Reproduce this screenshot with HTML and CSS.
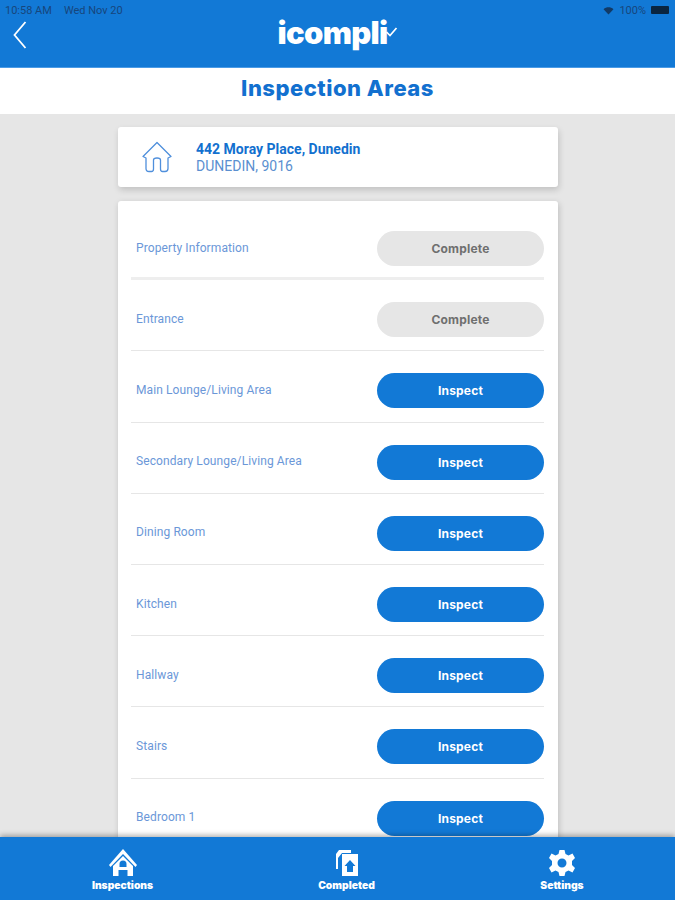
FILE: index.html
```html
<!DOCTYPE html>
<html lang="en">
<head>
<meta charset="utf-8">
<title>Inspection Areas</title>
<link rel="stylesheet" href="styles.css">
</head>
<body>
<div class="app">
  <header class="topbar">
    <div class="status">
      <div class="status-left"><span>10:58 AM</span><span>Wed Nov 20</span></div>
      <div class="status-right">
        <svg class="wifi" viewBox="0 0 12 10"><path d="M6 9.500 0.500 3.500C3.500.7 8.500.7 11.500 3.500Z" fill="#123a66"/></svg>
        <span>100%</span>
        <span class="battery"></span>
      </div>
    </div>
    <div class="nav">
      <svg class="back" viewBox="0 0 14 30"><path d="M13 2 2 15 13 28" fill="none" stroke="#fff" stroke-width="1.800"/></svg>
      <div class="logo">
        <span>icompli</span>
        <svg class="logo-check" viewBox="0 0 12 10"><path d="M1 5 4.500 8.500 11 1" fill="none" stroke="#fff" stroke-width="1.700"/></svg>
      </div>
    </div>
  </header>
  <div class="title-band"><h1>Inspection Areas</h1></div>
  <main class="content">
    <section class="address-card">
      <svg class="house" viewBox="0 0 32 32">
        <path d="M2 15.500 16 1.500 30 15.500 27 17V27.500Q27 30.500 24 30.500H21.500Q19.500 30.500 19.500 28V19Q19.500 17 16 17 12.500 17 12.500 19V28Q12.500 30.500 10.500 30.500H8Q5 30.500 5 27.500V17Z" fill="none" stroke="#4f8fdc" stroke-width="1.300" stroke-linejoin="round"/>
      </svg>
      <div class="address-text">
        <div class="address-line">442 Moray Place, Dunedin</div>
        <div class="address-sub">DUNEDIN, 9016</div>
      </div>
    </section>
    <section class="list-card">
      <div class="row row-first"><span class="label">Property Information</span><span class="btn done">Complete</span></div>
      <div class="row"><span class="label">Entrance</span><span class="btn done">Complete</span></div>
      <div class="row"><span class="label">Main Lounge/Living Area</span><span class="btn">Inspect</span></div>
      <div class="row"><span class="label">Secondary Lounge/Living Area</span><span class="btn">Inspect</span></div>
      <div class="row"><span class="label">Dining Room</span><span class="btn">Inspect</span></div>
      <div class="row"><span class="label">Kitchen</span><span class="btn">Inspect</span></div>
      <div class="row"><span class="label">Hallway</span><span class="btn">Inspect</span></div>
      <div class="row"><span class="label">Stairs</span><span class="btn">Inspect</span></div>
      <div class="row"><span class="label">Bedroom 1</span><span class="btn">Inspect</span></div>
    </section>
  </main>
  <nav class="tabbar">
    <div class="tab tab-a">
      <svg class="tab-icon" viewBox="0 0 28 28"><path fill="#fff" fill-rule="evenodd" d="M14 0 28 16 26.500 18 14 5 1.500 18 0 16ZM14 7 24 17V27H18.500V21H9.500V27H4V17ZM14 11.500A3.500 3.500 0 0 0 10.500 15V18H17.500V15A3.500 3.500 0 0 0 14 11.500Z"/></svg>
      <span>Inspections</span>
    </div>
    <div class="tab tab-b">
      <svg class="tab-icon" viewBox="0 0 28 28"><path fill="#fff" fill-rule="evenodd" d="M6 1H18V4H9L5 9V20H3V5ZM9 5H25V27H9ZM17 11 11.500 17H14V23H20V17H22.500Z"/></svg>
      <span>Completed</span>
    </div>
    <div class="tab tab-c">
      <svg class="tab-icon" viewBox="0 0 28 28"><path fill="#fff" fill-rule="evenodd" d="M11.500 1H16.500L17.500 5 20.500 6.500 24.500 4.500 27 9 24 12V16L27 19 24.500 23.500 20.500 21.500 17.500 23 16.500 27H11.500L10.500 23 7.500 21.500 3.500 23.500 1 19 4 16V12L1 9 3.500 4.500 7.500 6.500 10.500 5ZM14 9.500A4.500 4.500 0 1 0 14 18.500 4.500 4.500 0 1 0 14 9.500Z"/></svg>
      <span>Settings</span>
    </div>
  </nav>
</div>
</body>
</html>
```
FILE: styles.css
```css
* { box-sizing: border-box; }
html, body { margin: 0; padding: 0; }
body { font-family: "Roboto", "Liberation Sans", sans-serif; background: #e6e6e6; }
.app { width: 675px; height: 900px; display: flex; flex-direction: column; overflow: hidden; }
.topbar { height: 68px; flex: none; background: #1279d6; border-bottom: 1px solid #4b9be6; }
.status { height: 18px; padding: 2px 6px 0 5px; display: flex; justify-content: space-between; align-items: center; font-size: 11px; color: #17467c; }
.status-left { display: flex; gap: 12px; }
.status-right { display: flex; align-items: center; gap: 5px; }
.wifi { width: 11px; height: 9px; }
.battery { width: 18px; height: 8px; background: #0a2540; border-radius: 1px; }
.nav { position: relative; height: 49px; display: flex; justify-content: center; align-items: flex-start; }
.back { position: absolute; left: 12px; top: 2px; width: 15px; height: 30px; }
.logo { position: relative; top: -3px; font-family: "Inter", sans-serif; font-weight: 900; font-size: 31px; line-height: 36px; letter-spacing: -0.7px; color: #fff; width: 120px; }
.logo-check { position: absolute; left: 107px; top: 12px; width: 13px; height: 10px; }
.title-band { height: 46px; flex: none; background: #fff; display: flex; align-items: center; justify-content: center; padding-bottom: 6px; }
h1 { margin: 0; font-family: "Inter", sans-serif; font-weight: 800; font-size: 22px; letter-spacing: .5px; color: #1270cf; }
.content { flex: 1; min-height: 0; overflow: hidden; padding: 13px 117px 0 118px; display: flex; flex-direction: column; gap: 14px; }
.address-card { height: 60px; flex: none; background: #fff; border-radius: 3px; box-shadow: 1px 3px 6px rgba(0,0,0,.16); display: flex; align-items: center; padding-left: 23px; gap: 23px; }
.house { width: 32px; height: 32px; }
.address-text { line-height: 17px; padding-top: 2px; }
.address-line { font-weight: 700; font-size: 14px; color: #1270cf; }
.address-sub { font-size: 14px; color: #5b8fd0; }
.list-card { flex: none; background: #fff; border-radius: 3px 3px 0 0; box-shadow: 1px 2px 6px rgba(0,0,0,.18); padding: 8px 14px 0 13px; }
.row { height: 71.200px; display: flex; justify-content: space-between; align-items: center; padding: 9px 0 0 5px; border-bottom: 1.500px solid #e6e6e6; }
.row-first { padding-top: 11px; border-bottom: 3px solid #eeeeee; }
.label { font-size: 12px; letter-spacing: .1px; color: #6b97d8; position: relative; bottom: 1px; }
.btn { width: 167px; height: 35px; border-radius: 18px; background: #1279d6; color: #fff; font-family: "Inter", sans-serif; font-weight: 700; font-size: 12px; letter-spacing: .2px; display: flex; align-items: center; justify-content: center; }
.btn.done { background: #e6e6e6; color: #6f6f6f; }
.tabbar { height: 63px; flex: none; position: relative; background: #1279d6; box-shadow: 0 -2px 5px rgba(0,0,0,.3); }
.tab { position: absolute; top: 12px; width: 90px; display: flex; flex-direction: column; align-items: center; gap: 1px; color: #fff; font-family: "Inter", sans-serif; font-weight: 900; font-size: 10.300px; line-height: 14px; }
.tab-a { left: 77.500px; }
.tab-b { left: 301.500px; }
.tab-c { left: 517px; }
.tab-icon { width: 28px; height: 28px; }
```
